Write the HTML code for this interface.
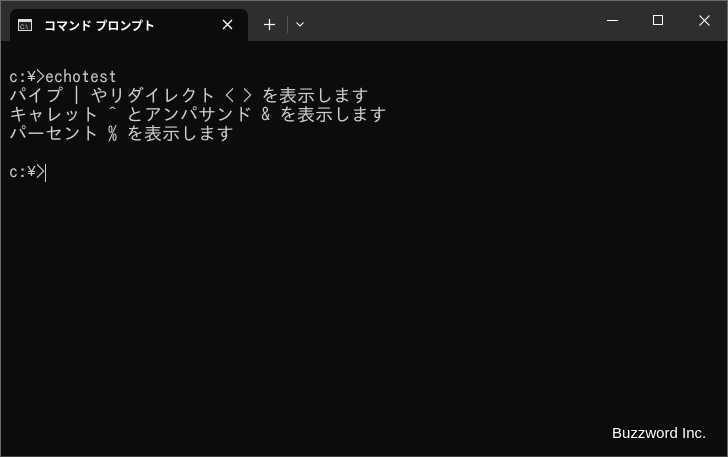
<!DOCTYPE html>
<html><head><meta charset="utf-8"><style>
*{margin:0;padding:0;box-sizing:border-box}
body{width:728px;height:457px;background:#0c0c0c;overflow:hidden;position:relative;font-family:"Liberation Sans",sans-serif}
.frame{position:absolute;inset:0;border:1px solid #6a6a6a;border-bottom-color:#444;pointer-events:none}
.bar{position:absolute;left:0;top:0;width:728px;height:41px;background:#2e2e2e}
.tab{position:absolute;left:10px;top:9px;width:238px;height:32px;background:#0c0c0c;border-radius:7px 7px 0 0}
.t{position:absolute;left:44px;top:17px;color:#fff;font:bold 12px "Liberation Sans","Noto Sans CJK JP",sans-serif}
.term{position:absolute;left:9px;top:68px;color:#cccccc;font:18px/19px "IPAGothic","Noto Sans CJK JP",monospace;white-space:pre}
.l{height:19px;position:relative}
.y{position:absolute;top:0;width:9px;font:15px/19px "Liberation Mono",monospace;text-align:center}
.wm{position:absolute;left:612px;top:425px;color:#fff;font:15px "Liberation Sans",sans-serif;text-shadow:0 0 2px #000}
</style></head><body>
<div class="bar"></div>
<div class="tab"></div>
<svg style="position:absolute;left:18px;top:19px" width="14" height="12"><rect x="0.5" y="0.5" width="13" height="11" fill="#222" stroke="#ddd"/><rect x="1" y="1" width="12" height="2" fill="#ddd"/><text x="2" y="10" font-size="6" fill="#ddd" font-family="Liberation Sans">C:\</text></svg>
<div class="t">コマンド プロンプト</div>
<svg style="position:absolute;left:222px;top:19px" width="11" height="11"><path d="M1 1L10 10M10 1L1 10" stroke="#fff" stroke-width="1.3"/></svg>
<svg style="position:absolute;left:264px;top:19px" width="11" height="11"><path d="M5.5 0V11M0 5.5H11" stroke="#fff" stroke-width="1.2"/></svg>
<div style="position:absolute;left:287px;top:16px;width:1px;height:17px;background:#555"></div>
<svg style="position:absolute;left:296px;top:22px" width="8" height="5"><path d="M0.5 0.5L4 4L7.5 0.5" stroke="#fff" fill="none"/></svg>
<div style="position:absolute;left:607px;top:20px;width:11px;height:1px;background:#fff"></div>
<div style="position:absolute;left:653px;top:15px;width:10px;height:10px;border:1px solid #fff"></div>
<svg style="position:absolute;left:699px;top:15px" width="11" height="11"><path d="M0.5 0.5L10.5 10.5M10.5 0.5L0.5 10.5" stroke="#fff" stroke-width="1.1"/></svg>
<div class="term"><div class="l">c:<span class="y" style="left:18px">¥</span> >echotest</div><div class="l">パイプ | やリダイレクト &lt; > を表示します</div><div class="l">キャレット ^ とアンパサンド &amp; を表示します</div><div class="l">パーセント % を表示します</div><div class="l"></div><div class="l">c:<span class="y" style="left:18px">¥</span> ><span style="position:absolute;left:36px;top:1px;width:1px;height:18px;background:#ccc"></span></div></div>
<div class="wm">Buzzword Inc.</div>
<div class="frame"></div>
</body></html>
